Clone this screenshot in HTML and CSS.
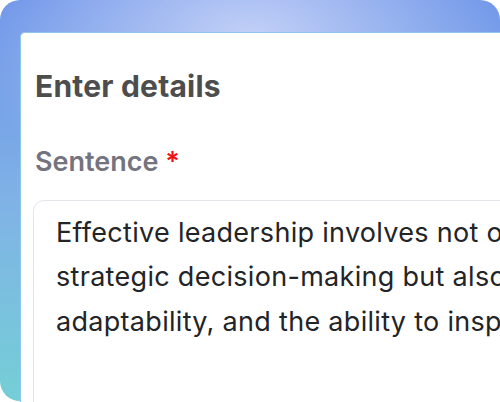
FILE: index.html
```html
<!DOCTYPE html>
<html>
<head>
<meta charset="utf-8">
<link rel="stylesheet" href="styles.css">
</head>
<body>
<div class="frame">
  <div class="card">
    <h1 class="title">Enter details</h1>
    <div class="label">Sentence <span class="req">*</span></div>
    <div class="field">
      <div class="line">Effective leadership involves not only visionary thinking and</div>
      <div class="line">strategic decision-making but also empathy, resilience,</div>
      <div class="line">adaptability, and the ability to inspire others.</div>
    </div>
  </div>
</div>
</body>
</html>
```
FILE: styles.css
```css
html, body {
  margin: 0;
  padding: 0;
  width: 500px;
  height: 402px;
  overflow: hidden;
  background: #ffffff;
}
.frame {
  width: 500px;
  height: 401px;
  border-radius: 20px;
  padding: 32px 0 0 20px;
  box-sizing: border-box;
  background:
    radial-gradient(ellipse 280px 170px at 250px 40px, rgba(200,212,248,0.95), rgba(200,212,248,0) 100%),
    linear-gradient(180deg, #6a92e8 0%, #80b2e6 50%, #74cfd6 100%);
}
.card {
  width: 560px;
  height: 420px;
  background: #ffffff;
  border-top: 1px solid #8fc6ee;
  border-left: 1px solid #8fc6ee;
  border-top-left-radius: 5px;
  padding: 35px 0 0 12px;
  box-sizing: border-box;
  font-family: Inter, "Noto Sans", sans-serif;
}
.title {
  margin: 0 0 0 2px;
  font-size: 30px;
  line-height: 36px;
  font-weight: 700;
  letter-spacing: 0.2px;
  color: #4d4d4d;
}
.label {
  margin: 42px 0 0 2px;
  font-size: 27px;
  line-height: 32px;
  font-weight: 600;
  color: #74747f;
}
.req {
  color: #f01010;
}
.field {
  margin-top: 22px;
  border: 1.5px solid #e3e5eb;
  border-radius: 11px;
  padding: 9.5px 0 0 22px;
  height: 300px;
  font-size: 27px;
  line-height: 44.5px;
  letter-spacing: 0.3px;
  color: #232427;
  white-space: nowrap;
}
```
